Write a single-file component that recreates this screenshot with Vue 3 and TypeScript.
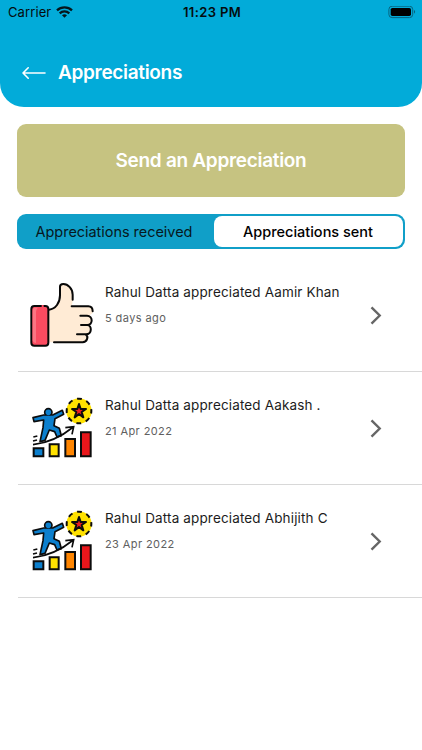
<script setup lang="ts">
import { ref } from 'vue'

interface Appreciation {
  id: number
  title: string
  date: string
  badge: 'thumb' | 'growth'
}

const tab = ref<'received' | 'sent'>('sent')

const items: Appreciation[] = [
  { id: 1, title: 'Rahul Datta appreciated Aamir Khan', date: '5 days ago', badge: 'thumb' },
  { id: 2, title: 'Rahul Datta appreciated Aakash .', date: '21 Apr 2022', badge: 'growth' },
  { id: 3, title: 'Rahul Datta appreciated Abhijith C', date: '23 Apr 2022', badge: 'growth' },
]
</script>

<template>
  <main class="screen">
    <header class="header">
      <div class="status">
        <div class="carrier">
          <span>Carrier</span>
          <svg class="wifi" width="17" height="13" viewBox="0 0 17 13" fill="none" stroke="#06161c" stroke-width="2.3">
            <path d="M1 4.400C5.200.4 11.800.4 16 4.400" />
            <path d="M3.700 7.300c2.700-2.500 6.900-2.500 9.600 0" />
            <path d="M8.500 11.800 6 9.300c1.400-1.300 3.600-1.300 5 0z" fill="#06161c" stroke="none" />
          </svg>
        </div>
        <span class="clock">11:23 PM</span>
        <svg class="battery" width="28" height="13" viewBox="0 0 28 13">
          <rect x=".9" y=".2" width="23.800" height="11.400" rx="3.200" fill="none" stroke="#08647f" stroke-width="1" />
          <rect x="2.700" y="1.900" width="20.300" height="8" rx="1.700" fill="#000" />
          <path d="M26 4.100c1.500.6 1.500 3 0 3.600z" fill="#08647f" />
        </svg>
      </div>
      <div class="titlebar">
        <svg width="24" height="14" viewBox="0 0 24 14" fill="none" stroke="#fff" stroke-width="1.600" stroke-linecap="round" stroke-linejoin="round">
          <path d="M23 7H1M6.200 1.800 1 7l5.200 5.200" />
        </svg>
        <h1>Appreciations</h1>
      </div>
    </header>

    <button class="send" type="button">Send an Appreciation</button>

    <div class="tabs">
      <button type="button" class="tab first" :class="{ active: tab === 'received' }" @click="tab = 'received'"><span>Appreciations received</span></button>
      <button type="button" class="tab second" :class="{ active: tab === 'sent' }" @click="tab = 'sent'"><span>Appreciations sent</span></button>
    </div>

    <ul class="list">
      <li v-for="item in items" :key="item.id" class="row">
        <svg v-if="item.badge === 'thumb'" class="badge" viewBox="0 0 255 240" fill="none" stroke="#080808" stroke-width="6" stroke-linecap="round" stroke-linejoin="round">
          <path d="M82 104c22-1 38-23 38-43V35c0-5 4-8 10-8 14 0 29 14 29 32 0 14-1 22-4 35h54c15 0 15 26-4 27 14 2 13 27-1 29 12 3 11 25-4 28 11 7 4 24-9 24H82z" fill="#ffebd5" stroke="none" />
          <rect x="34" y="93" width="51" height="119" rx="9" fill="#fb4b60" />
          <path d="M43 98h11c-5 4-6 8-6 17v89c-6 0-10-4-10-9v-87c0-6 2-9 5-10z" fill="#fc7583" stroke="none" />
          <path d="M65 93h6" stroke="#fb4b60" stroke-linecap="butt" />
          <path d="M87 104c20-2 33-21 33-43V35c0-5 4-8 10-8 14 0 28 14 28 32v15" />
          <path d="M155 94h50c8 0 13 5 13 15" />
          <path d="M181 122h20c18 0 19 28 1 28h-19M202 150c14 1 15 28-4 28h-27M197 178c10 7 4 24-9 24h-86" />
        </svg>
        <svg v-else class="badge" viewBox="0 -6 255 240" stroke="#0c0c0c" stroke-width="6" stroke-linejoin="round">
          <circle cx="177" cy="63" r="38" fill="#ffe100" stroke="none" />
          <circle cx="177" cy="63" r="37" fill="none" stroke-dasharray="14.500 14.560" stroke-dashoffset="7" />
          <path d="m177 42 5 15 16 0-13 9 5 16-13-10-13 10 5-16-13-9 16 0z" fill="#e81c20" />
          <path d="M39 83 42 95 71 90 69 113 60 155 75 151 88 120 104 125 111 141 124 137 118 115 102 107 105 86 131 73 127 61 98 75H71z" fill="#0c7fcd" stroke-width="5" />
          <circle cx="85" cy="67" r="11" fill="#0c7fcd" stroke-width="5" />
          <path d="M76 77h19v11H74z" fill="#0c7fcd" stroke="none" />
          <path d="M39 164c49-6 83-22 121-53M136 113l25-3-5 23M40 141l12-3M39 153l12-3" fill="none" stroke-width="5" stroke-linejoin="miter" />
          <g stroke-linejoin="miter">
            <path d="M41 175h29v24H41z" fill="#0c7fcd" />
            <path d="M89 163h27v36H89z" fill="#ffe100" />
            <path d="M136 147h29v52h-29z" fill="#ff8500" />
            <path d="M183 127h29v72h-29z" fill="#e8161b" />
          </g>
        </svg>
        <div class="info">
          <p class="name">{{ item.title }}</p>
          <p class="date">{{ item.date }}</p>
        </div>
        <svg class="chevron" width="12" height="20" viewBox="0 0 12 20" fill="none" stroke="#666" stroke-width="2.400">
          <path d="m1.500 1.300 8.200 8.200-8.200 8.200" />
        </svg>
      </li>
    </ul>
  </main>
</template>

<style>
body {
  margin: 0;
  background: #fff;
}
</style>

<style scoped>
.screen {
  width: 422px;
  height: 750px;
  overflow: hidden;
  background: #fff;
  font-family: Inter, "Liberation Sans", sans-serif;
  color: #050b0e;
}
.header {
  height: 107px;
  box-sizing: border-box;
  background: #02abd9;
  border-radius: 0 0 24px 24px;
}
.status {
  height: 24px;
  display: grid;
  grid-template-columns: 1fr auto 1fr;
  align-items: center;
  padding: 0 6px 0 8px;
  font-size: 13px;
  line-height: 24px;
}
.carrier {
  display: flex;
  align-items: center;
  gap: 5px;
  letter-spacing: 0.1px;
}
.clock {
  font-weight: 600;
  letter-spacing: 0.35px;
}
.battery {
  justify-self: end;
}
.titlebar {
  display: flex;
  align-items: center;
  height: 30px;
  padding: 34px 0 0 22px;
  gap: 12px;
}
h1 {
  margin: 0;
  font-size: 19px;
  font-weight: 600;
  line-height: 30px;
  letter-spacing: -0.32px;
  color: #fff;
}
button {
  font-family: inherit;
  border: 0;
  padding: 0;
}
.send {
  display: block;
  width: 388px;
  height: 73px;
  margin: 17px 0 0 17px;
  border-radius: 9px;
  background: #c6c381;
  color: #fff;
  font-size: 19px;
  font-weight: 600;
  letter-spacing: -0.3px;
}
.tabs {
  display: grid;
  grid-template-columns: 195px 189px;
  width: 388px;
  height: 35px;
  box-sizing: border-box;
  margin: 17px 0 0 17px;
  padding: 2px;
  border-radius: 9px;
  background: #109fc8;
}
.tab {
  border-radius: 8px;
  background: transparent;
  color: #071820;
  font-size: 14.5px;
  font-weight: 400;
}
.first {
  padding-right: 5px;
  letter-spacing: -0.04px;
}
.second {
  padding: 0 1px 1px 0;
}
.tab.active {
  background: #fff;
  color: #000;
  font-weight: 500;
}
.list {
  list-style: none;
  margin: 10px 0 0 18px;
  padding: 0;
}
.row {
  display: flex;
  height: 113px;
  box-sizing: border-box;
  border-bottom: 1px solid #d8d8d8;
  padding: 16px 40px 0 2px;
}
.badge {
  flex: none;
  width: 85px;
  height: 80px;
}
.info {
  flex: 1;
  padding-top: 7px;
}
p {
  margin: 0;
  white-space: nowrap;
}
.name {
  font-size: 13.5px;
  line-height: 20px;
  letter-spacing: 0.15px;
  color: #1c1c1c;
}
.date {
  margin-top: 8px;
  font-size: 11px;
  line-height: 16px;
  letter-spacing: 0.4px;
  color: #606060;
}
.chevron {
  margin-top: 31px;
}
</style>
